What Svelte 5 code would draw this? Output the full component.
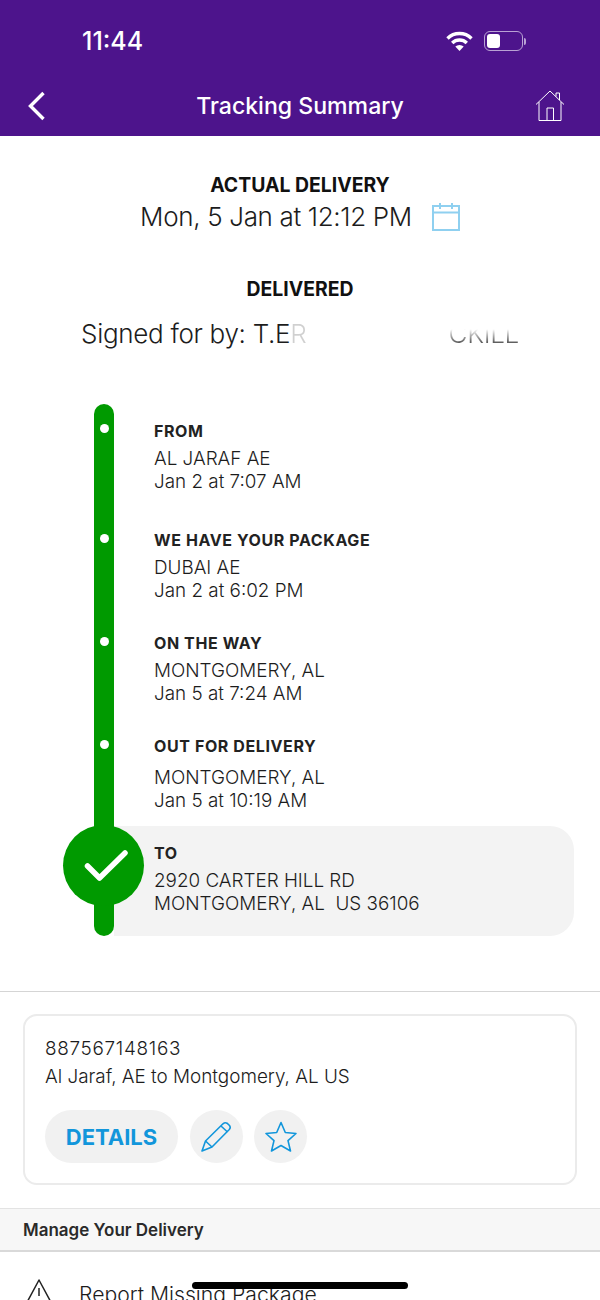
<script>
  const stops = [
    { label: 'FROM', lines: ['AL JARAF AE', 'Jan 2 at 7:07 AM'], height: 109 },
    { label: 'WE HAVE YOUR PACKAGE', lines: ['DUBAI AE', 'Jan 2 at 6:02 PM'], height: 103 },
    { label: 'ON THE WAY', lines: ['MONTGOMERY, AL', 'Jan 5 at 7:24 AM'], height: 103 },
    { label: 'OUT FOR DELIVERY', lines: ['MONTGOMERY, AL', 'Jan 5 at 10:19 AM'], height: 107, wide: true }
  ];
</script>

<div class="page">
  <header class="top">
    <div class="status">
      <span class="time">11:44</span>
      <div class="status-icons">
        <svg width="27" height="20" viewBox="0 0 27 20">
          <path d="M1.500 7.500 A17 17 0 0 1 25.500 7.500" fill="none" stroke="#fff" stroke-width="3.400" />
          <path d="M6.200 12 A10.500 10.500 0 0 1 20.800 12" fill="none" stroke="#fff" stroke-width="3.400" />
          <path d="M13.500 20 L9.300 15.600 A6 6 0 0 1 17.700 15.600 Z" fill="#fff" />
        </svg>
        <div class="battery"><span class="level"></span></div>
        <span class="nub"></span>
      </div>
    </div>
    <nav class="bar">
      <svg class="back" width="20" height="30" viewBox="0 0 20 30">
        <path d="M17.500 2 L4.500 15 L17.500 28" fill="none" stroke="#fff" stroke-width="3.400" />
      </svg>
      <h1>Tracking Summary</h1>
      <svg class="home" width="30" height="32" viewBox="0 0 30 32" fill="none" stroke="#fff" stroke-width="1">
        <path d="M1 14.500 L15 1 L29 14.500" />
        <path d="M4 12 V30.500 H26 V12" />
        <path d="M12 30.500 V18 H18.500 V30.500" />
        <path d="M21 6.500 V3 H24.500 V10" />
      </svg>
    </nav>
  </header>

  <section class="summary">
    <h2>ACTUAL DELIVERY</h2>
    <div class="when">
      <span>Mon, 5 Jan at 12:12 PM</span>
      <svg width="28" height="28" viewBox="0 0 28 28" fill="none" stroke="#8fd0f0" stroke-width="2">
        <rect x="1" y="3" width="26" height="24" />
        <path d="M1 9.500 H27 M8 0 V6 M20 0 V6" />
      </svg>
    </div>
    <h2 class="delivered">DELIVERED</h2>
    <div class="signed">
      <span>Signed for by: T.E<span class="faded">R</span></span>
      <span class="signed-tail">CKILL</span>
    </div>
  </section>

  <section class="timeline">
    <div class="rail"></div>
    {#each stops as stop}
      <div class="stop" class:wide={stop.wide} style="height: {stop.height}px">
        <span class="dot"></span>
        <h3>{stop.label}</h3>
        {#each stop.lines as line}
          <p>{line}</p>
        {/each}
      </div>
    {/each}
    <div class="dest">
      <div class="check">
        <svg width="50" height="36" viewBox="0 0 50 36">
          <path d="M8.500 18 L20.500 30 L46 5" fill="none" stroke="#fff" stroke-width="5.500" stroke-linecap="round" stroke-linejoin="round" />
        </svg>
      </div>
      <h3>TO</h3>
      <p>2920 CARTER HILL RD</p>
      <p class="pre">MONTGOMERY, AL  US 36106</p>
    </div>
  </section>

  <section class="shipment">
    <div class="card">
      <p class="number">887567148163</p>
      <p>Al Jaraf, AE to Montgomery, AL US</p>
      <div class="actions">
        <button class="details">DETAILS</button>
        <button class="round" aria-label="Edit">
          <svg width="32" height="32" viewBox="0 0 32 32" fill="none" stroke="#1296db" stroke-width="1.600" stroke-linejoin="round">
            <path d="M2 30 L5.500 20 L23 2.800 Q25 1 27 2.200 L29.500 4.500 Q31 6.500 29.300 8.500 L12 26 Z" />
            <path d="M5.500 20 L12 26 M21 5 L27.500 11" />
          </svg>
        </button>
        <button class="round" aria-label="Favourite">
          <svg width="32" height="32" viewBox="0 0 32 32" fill="none" stroke="#1296db" stroke-width="1.600" stroke-linejoin="round">
            <path d="M16 1.500 L20.300 11.500 L31 12.500 L23 19.600 L25.500 30 L16 24.500 L6.500 30 L9 19.600 L1 12.500 L11.700 11.500 Z" />
          </svg>
        </button>
      </div>
    </div>
  </section>

  <div class="manage">Manage Your Delivery</div>

  <div class="report">
    <svg width="32" height="30" viewBox="0 0 32 30" fill="none" stroke="#222" stroke-width="1.500">
      <path d="M16 2 L30 28 H2 Z" stroke-linejoin="round" />
      <path d="M16 10 V18" />
    </svg>
    <span>Report Missing Package</span>
  </div>

  <div class="home-indicator"></div>
</div>

<style>
  :global(body) {
    margin: 0;
    background: #fff;
  }
  .page {
    position: relative;
    width: 600px;
    height: 1300px;
    overflow: hidden;
    font-family: Inter, "Liberation Sans", sans-serif;
    color: #1c1c1c;
  }
  .top {
    height: 136px;
    background: #4d148c;
    color: #fff;
  }
  .status {
    height: 80px;
    box-sizing: border-box;
    padding: 2px 74px 0 82px;
    display: flex;
    justify-content: space-between;
    align-items: center;
  }
  .time {
    font-size: 25px;
    font-weight: 500;
  }
  .status-icons {
    display: flex;
    align-items: center;
  }
  .battery {
    width: 39px;
    height: 20px;
    margin-left: 11px;
    box-sizing: border-box;
    border: 1px solid #b9a2d4;
    border-radius: 6px;
    padding: 2px;
  }
  .level {
    display: block;
    width: 13px;
    height: 14px;
    border-radius: 3px;
    background: #fff;
  }
  .nub {
    width: 2px;
    height: 7px;
    margin-left: 1px;
    border-radius: 0 2px 2px 0;
    background: #b9a2d4;
  }
  .bar {
    height: 52px;
    padding: 0 35px;
    display: grid;
    grid-template-columns: 1fr auto 1fr;
    align-items: center;
  }
  .bar h1 {
    margin: 0;
    font-size: 23.100px;
    font-weight: 500;
  }
  .back {
    margin-left: -9px;
  }
  .home {
    justify-self: end;
  }
  .summary {
    padding-top: 38px;
    text-align: center;
  }
  h2 {
    margin: 0;
    font-size: 19.400px;
    line-height: 22px;
    font-weight: 700;
    color: #111;
  }
  .when {
    margin-top: 5px;
    display: flex;
    justify-content: center;
    align-items: center;
    gap: 20px;
    font-size: 26px;
    font-weight: 300;
    line-height: 32px;
    letter-spacing: -0.340px;
  }
  .delivered {
    margin-top: 45px;
  }
  .signed {
    margin-top: 18px;
    padding: 0 81px;
    display: flex;
    justify-content: space-between;
    font-size: 26px;
    font-weight: 300;
    line-height: 32px;
    letter-spacing: -0.300px;
    white-space: nowrap;
  }
  .faded {
    opacity: 0.2;
  }
  .signed-tail {
    opacity: 0.7;
    mask-image: linear-gradient(to bottom, transparent 35%, #000 75%);
  }
  .timeline {
    position: relative;
    margin-top: 54px;
    height: 532px;
  }
  .rail {
    position: absolute;
    left: 94px;
    top: 0;
    width: 20px;
    height: 532px;
    border-radius: 10px;
    background: #009a00;
  }
  .stop {
    position: relative;
    box-sizing: border-box;
    padding: 17px 0 0 154px;
  }
  .dot {
    position: absolute;
    left: 100px;
    top: 21px;
    width: 9px;
    height: 9px;
    border-radius: 50%;
    background: #fff;
  }
  .rail + .stop .dot {
    top: 20px;
  }
  h3 {
    margin: 0;
    font-size: 16px;
    line-height: 20px;
    font-weight: 700;
    letter-spacing: 0.600px;
    color: #222;
  }
  .stop p, .dest p {
    margin: 0;
    font-size: 18.850px;
    font-weight: 300;
    line-height: 23px;
  }
  .stop h3 {
    margin-bottom: 6px;
  }
  .stop.wide h3 {
    margin-bottom: 10px;
  }
  .dest {
    position: relative;
    width: 460px;
    height: 110px;
    margin-left: 114px;
    box-sizing: border-box;
    padding: 17px 0 0 40px;
    background: #f3f3f3;
    border-radius: 0 24px 24px 0;
  }
  .dest h3 {
    margin-bottom: 6px;
  }
  .pre {
    white-space: pre;
  }
  .check {
    position: absolute;
    left: -51px;
    top: -1px;
    width: 81px;
    height: 81px;
    border-radius: 50%;
    background: #009a00;
    display: flex;
    align-items: center;
    justify-content: center;
  }
  .shipment {
    margin-top: 55px;
    border-top: 1px solid #d5d5d5;
    padding: 22px 23px 23px;
  }
  .card {
    height: 171px;
    box-sizing: border-box;
    padding: 19px 20px 0;
    border: 2px solid #ebebeb;
    border-radius: 14px;
  }
  .card p {
    margin: 0;
    font-size: 18.900px;
    line-height: 28px;
    font-weight: 300;
  }
  .card .number {
    letter-spacing: 0.700px;
  }
  .actions {
    margin-top: 19px;
    display: flex;
    gap: 11.500px;
  }
  button {
    border: 0;
    padding: 0;
    background: #f1f1f1;
    border-radius: 27px;
    height: 53px;
    display: flex;
    align-items: center;
    justify-content: center;
  }
  .details {
    width: 133px;
    font-family: inherit;
    font-size: 22px;
    font-weight: 700;
    color: #1296db;
  }
  .round {
    width: 53px;
  }
  .manage {
    height: 44px;
    box-sizing: border-box;
    padding-left: 23px;
    display: flex;
    align-items: center;
    background: #f7f7f7;
    border-top: 1px solid #e3e3e3;
    border-bottom: 2px solid #d9d9d9;
    font-size: 17px;
    font-weight: 600;
    color: #2a2a2a;
  }
  .report {
    margin-top: 26px;
    padding-left: 23px;
    display: flex;
    align-items: flex-start;
    gap: 24px;
    font-size: 21.200px;
    font-weight: 300;
    line-height: 32px;
  }
  .home-indicator {
    position: absolute;
    left: 192px;
    top: 1282px;
    width: 216px;
    height: 7px;
    border-radius: 4px;
    background: #000;
  }
</style>
